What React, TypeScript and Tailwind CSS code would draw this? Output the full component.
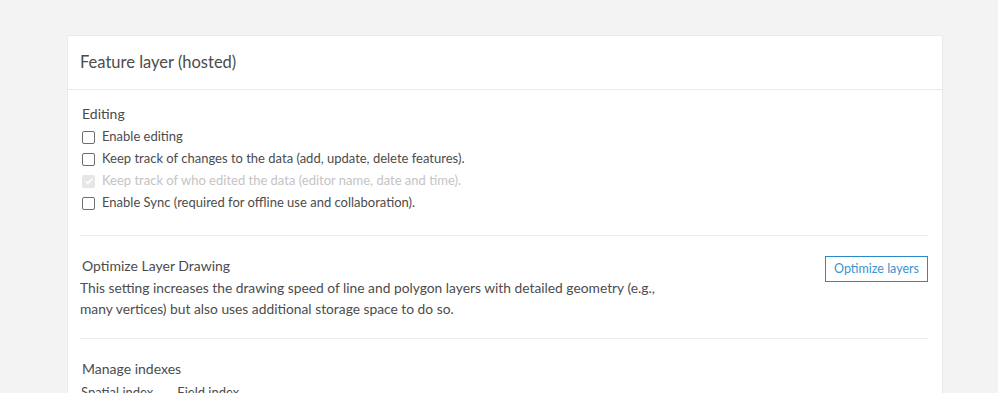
import React from "react";

const Checkbox = ({ checked = false, disabled = false }: { checked?: boolean; disabled?: boolean }) => {
  if (disabled && checked) {
    return (
      <span className="flex h-[13px] w-[13px] shrink-0 items-center justify-center rounded-[2px] bg-[#e6e6e6]">
        <svg viewBox="0 0 12 12" className="h-[10px] w-[10px]" fill="none" stroke="#fff" strokeWidth="1.8">
          <path d="M2 6.2l2.6 2.6L10 3.2" />
        </svg>
      </span>
    );
  }
  return <span className="h-[13px] w-[13px] shrink-0 rounded-[2px] border border-[#6e6e6e] bg-white" />;
};

const options = [
  { label: "Enable editing" },
  { label: "Keep track of changes to the data (add, update, delete features)." },
  { label: "Keep track of who edited the data (editor name, date and time).", checked: true, disabled: true },
  { label: "Enable Sync (required for offline use and collaboration)." },
];

export default function App() {
  return (
    <div className="h-[393px] w-full overflow-hidden bg-[#f3f3f3] pt-[35px] font-['Lato','Noto_Sans',sans-serif] text-[#4c4c4c]">
      <div className="ml-[67px] w-[876px] border border-[#eaeaea] bg-white">
        {/* Header */}
        <div className="flex h-[54px] items-center border-b border-[#eaeaea] px-3 text-[16.5px]">
          Feature layer (hosted)
        </div>

        <div className="pl-3 pr-[14px]">
          {/* Editing */}
          <div className="border-b border-[#ebebeb] pb-[21px] pt-[13px]">
            <div className="mb-[1px] pl-[2px] text-[14px] leading-[22px]">Editing</div>
            {options.map((o) => (
              <label key={o.label} className="flex h-[22px] items-center gap-[7px] pl-[2px] text-[13px]">
                <Checkbox checked={o.checked} disabled={o.disabled} />
                <span className={o.disabled ? "text-[#c4c4c4]" : ""}>{o.label}</span>
              </label>
            ))}
          </div>

          {/* Optimize Layer Drawing */}
          <div className="flex items-start justify-between border-b border-[#ebebeb] pb-[19px] pt-[19px]">
            <div>
              <div className="pl-[2px] text-[14px] leading-[22px]">Optimize Layer Drawing</div>
              <p className="w-[600px] text-[13.8px] leading-[21px]">
                This setting increases the drawing speed of line and polygon layers with detailed geometry (e.g.,
                many vertices) but also uses additional storage space to do so.
              </p>
            </div>
            <button className="mt-[1px] h-[26px] w-[103px] border border-[#2b8bc8] bg-white text-[12.5px] text-[#3b93cf]">
              Optimize layers
            </button>
          </div>

          {/* Manage indexes */}
          <div className="pt-[19px]">
            <div className="pl-[2px] text-[14px] leading-[22px]">Manage indexes</div>
            <div className="mt-[2px] flex gap-6 pl-[1px] text-[13px] leading-[21px]">
              <span>Spatial index</span>
              <span>Field index</span>
            </div>
          </div>
        </div>
      </div>
    </div>
  );
}
